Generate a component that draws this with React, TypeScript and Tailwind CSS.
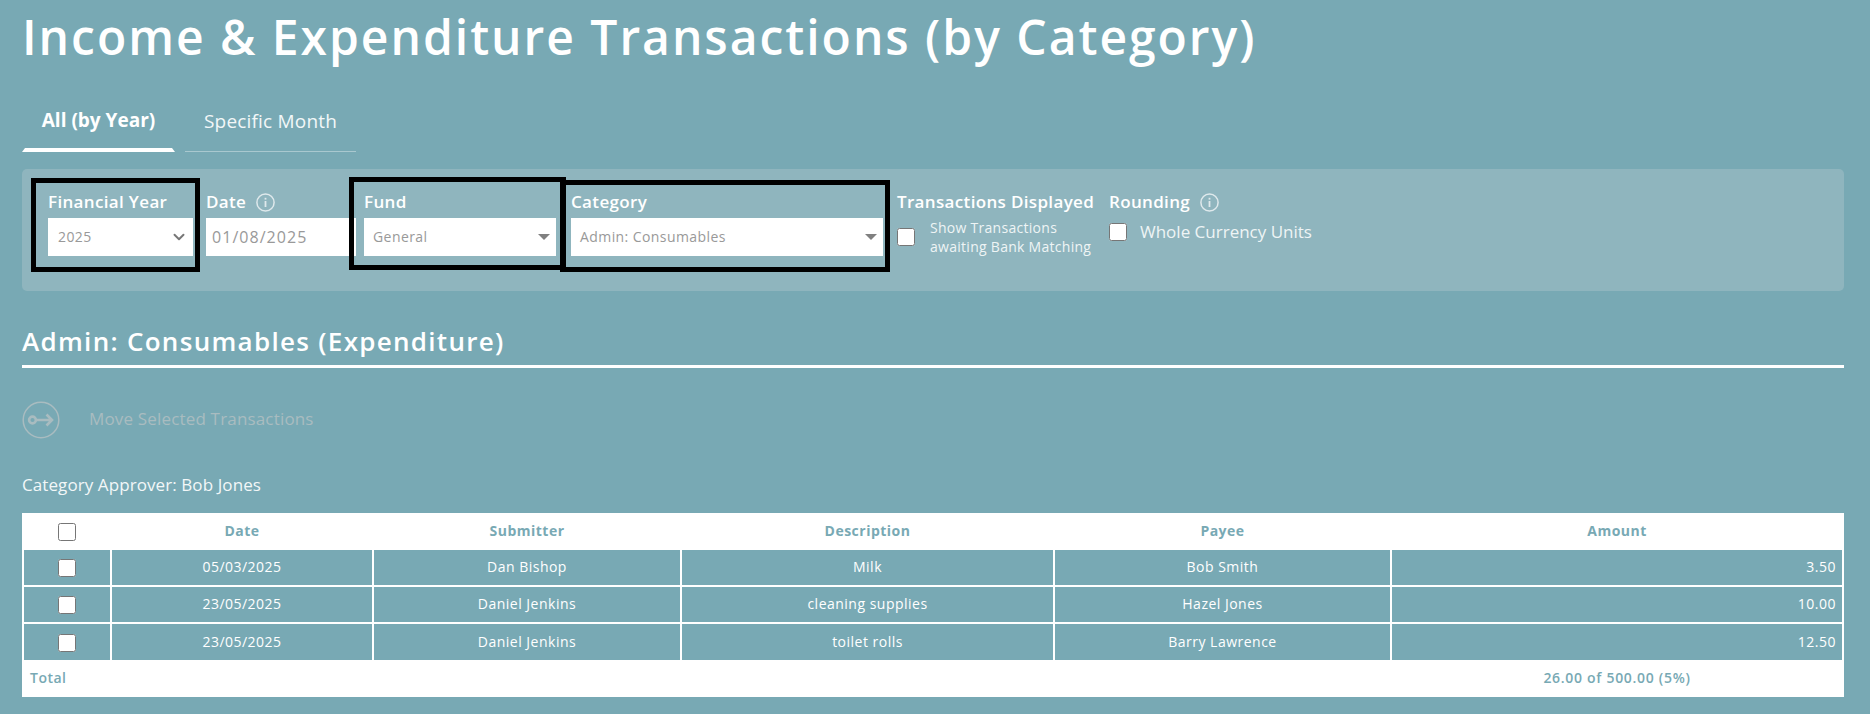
import { ChevronDown } from "lucide-react";

const rows = [
  { date: "05/03/2025", submitter: "Dan Bishop", description: "Milk", payee: "Bob Smith", amount: "3.50" },
  { date: "23/05/2025", submitter: "Daniel Jenkins", description: "cleaning supplies", payee: "Hazel Jones", amount: "10.00" },
  { date: "23/05/2025", submitter: "Daniel Jenkins", description: "toilet rolls", payee: "Barry Lawrence", amount: "12.50" },
];

const InfoIcon = () => (
  <svg width="19" height="19" viewBox="0 0 19 19" fill="none" className="text-[#dfe9ec]">
    <circle cx="9.5" cy="9.5" r="8.6" stroke="currentColor" strokeWidth="1.5" />
    <rect x="8.6" y="8" width="1.8" height="6" fill="currentColor" />
    <rect x="8.6" y="4.8" width="1.8" height="1.8" fill="currentColor" />
  </svg>
);

const Triangle = () => (
  <div className="w-0 h-0 border-x-[6px] border-x-transparent border-t-[6px] border-t-[#808080]" />
);

const FieldLabel = ({ children }: { children: React.ReactNode }) => (
  <div className="h-[24px] flex items-center gap-[10px] font-semibold text-white text-[17px] leading-[24px] tracking-[0.02em] whitespace-nowrap">
    {children}
  </div>
);

const SelectBox = ({ value, children, pad }: { value: string; children: React.ReactNode; pad: string }) => (
  <div className={`h-[38px] mt-[4px] bg-white flex items-center justify-between text-[#999] text-[14px] tracking-[0.03em] ${pad}`}>
    <span className="-mt-[2px]">{value}</span>
    {children}
  </div>
);

export default function App() {
  return (
    <div className="min-h-screen h-[714px] overflow-hidden bg-[#78a9b4] text-white pl-[22px] pr-[26px] pb-[17px] font-['Open_Sans',sans-serif]">
      <h1 className="h-[76px] pt-[2px] text-[48px] leading-[70px] font-semibold tracking-[0.041em] whitespace-nowrap">
        Income &amp; Expenditure Transactions (by Category)
      </h1>

      {/* Tabs */}
      <div className="h-[93px] flex items-end gap-[10px] pb-[17px]">
        <div className="w-[153px] h-[61px] flex flex-col items-center">
          <div className="flex-1 flex items-center pt-[2px] font-bold text-[19px]">All (by Year)</div>
          <div className="w-full h-[4px] bg-white [clip-path:polygon(3px_0,calc(100%-3px)_0,100%_100%,0_100%)]" />
        </div>
        <div className="w-[171px] h-[61px] flex flex-col items-center">
          <div className="flex-1 flex items-center text-[19px] tracking-[0.01em] text-[#f2f7f8]">Specific Month</div>
          <div className="w-full h-px bg-[#a9c8cf]" />
        </div>
      </div>

      {/* Filters */}
      <div className="h-[122px] rounded-[5px] bg-[#8fb5be] flex items-start pl-[9px] pt-[9px]">
        <div className="w-[169px] h-[94px] shrink-0 border-[5px] border-black pl-[12px] pr-[2px] pt-[7px]">
          <FieldLabel>Financial Year</FieldLabel>
          <SelectBox value="2025" pad="pl-[10px] pr-[5px]">
            <ChevronDown size={18} strokeWidth={2.6} className="text-[#777]" />
          </SelectBox>
        </div>
        <div className="w-[150px] shrink-0 ml-[6px] pt-[12px]">
          <FieldLabel>
            Date <InfoIcon />
          </FieldLabel>
          <input
            readOnly
            value="01/08/2025"
            className="w-full h-[38px] mt-[4px] bg-white text-[#999] text-[16px] tracking-[0.065em] pl-[6px]"
          />
        </div>
        <div className="relative w-[217px] h-[93px] shrink-0 -ml-[7px] -mt-[1px] border-[5px] border-black pl-[10px] pr-[5px] pt-[8px]">
          <FieldLabel>Fund</FieldLabel>
          <SelectBox value="General" pad="pl-[9px] pr-[6px]">
            <Triangle />
          </SelectBox>
        </div>
        <div className="relative w-[330px] h-[92px] shrink-0 -ml-[6px] mt-[2px] border-[5px] border-black pl-[6px] pr-[2px] pt-[5px]">
          <FieldLabel>Category</FieldLabel>
          <SelectBox value="Admin: Consumables" pad="pl-[9px] pr-[6px]">
            <Triangle />
          </SelectBox>
        </div>
        <div className="w-[212px] shrink-0 ml-[7px] pt-[12px]">
          <FieldLabel>Transactions Displayed</FieldLabel>
          <div className="flex items-center gap-[15px] mt-[4px]">
            <input type="checkbox" className="w-[18px] h-[18px] shrink-0" />
            <div className="text-[14px] leading-[19px] tracking-[0.02em] text-[#eef4f5] whitespace-nowrap">
              Show Transactions
              <br />
              awaiting Bank Matching
            </div>
          </div>
        </div>
        <div className="pt-[12px]">
          <FieldLabel>
            Rounding <InfoIcon />
          </FieldLabel>
          <div className="flex items-center gap-[13px] mt-[8px]">
            <input type="checkbox" className="w-[18px] h-[18px] shrink-0" />
            <span className="text-[17px] leading-[20px] text-[#eef4f5]">Whole Currency Units</span>
          </div>
        </div>
      </div>

      {/* Category */}
      <h2 className="mt-[33px] h-[44px] border-b-[3px] border-white text-[26px] leading-[34px] font-semibold tracking-[0.05em]">
        Admin: Consumables (Expenditure)
      </h2>

      <div className="mt-[33px] h-[37px] flex items-center gap-[29px] text-[#a9bcc0]">
        <svg width="38" height="38" viewBox="0 0 38 38" fill="none" stroke="currentColor">
          <circle cx="19" cy="19" r="17.8" strokeWidth="1.5" />
          <circle cx="10.5" cy="19" r="3.4" strokeWidth="2.6" />
          <path d="M14 19H30M24.5 13.5L30 19L24.5 24.5" strokeWidth="2.6" />
        </svg>
        <span className="-mt-[2px] text-[17px] tracking-[0.01em]">Move Selected Transactions</span>
      </div>

      <div className="mt-[36px] h-[24px] text-[17px] leading-[22px] tracking-[0.005em] text-[#f2f7f8]">
        Category Approver: Bob Jones
      </div>

      <table className="mt-[15px] w-full table-fixed border-separate border-spacing-[2px] bg-white text-[14px] tracking-[0.035em] [&_td]:pb-[2px] [&_th]:pb-[3px]">
        <colgroup>
          <col className="w-[86px]" />
          <col className="w-[260px]" />
          <col className="w-[306px]" />
          <col className="w-[371px]" />
          <col className="w-[335px]" />
          <col />
        </colgroup>
        <thead className="text-[#78a9b4] font-bold">
          <tr className="h-[33px]">
            <th className="font-bold">
              <input type="checkbox" className="w-[18px] h-[18px] align-middle" />
            </th>
            <th className="font-bold">Date</th>
            <th className="font-bold">Submitter</th>
            <th className="font-bold">Description</th>
            <th className="font-bold">Payee</th>
            <th className="font-bold">Amount</th>
          </tr>
        </thead>
        <tbody className="text-center">
          {rows.map((row, i) => (
            <tr key={i} className={i === 2 ? "h-[36px] bg-[#78a9b4]" : "h-[35px] bg-[#78a9b4]"}>
              <td>
                <input type="checkbox" className="w-[18px] h-[18px] align-middle" />
              </td>
              <td>{row.date}</td>
              <td>{row.submitter}</td>
              <td>{row.description}</td>
              <td>{row.payee}</td>
              <td className="text-right pr-[6px]">{row.amount}</td>
            </tr>
          ))}
          <tr className="h-[33px] text-[#78a9b4] font-semibold">
            <td colSpan={5} className="text-left pl-[6px]">Total</td>
            <td className="tracking-[0.05em]">26.00 of 500.00 (5%)</td>
          </tr>
        </tbody>
      </table>
    </div>
  );
}
